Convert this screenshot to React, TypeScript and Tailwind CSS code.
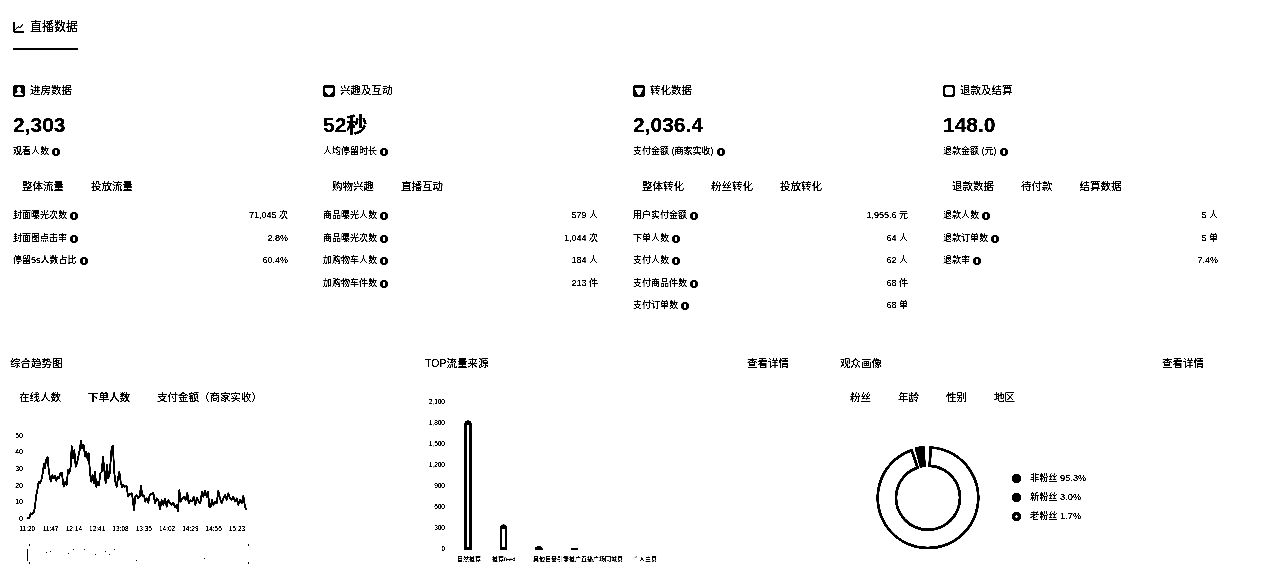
import React from "react";

const linePts = [
  80,505, 88,505, 92,490, 97,492, 102,485, 105,470, 108,440, 112,420, 116,395, 120,400, 124,390, 128,370, 132,340, 135,355, 138,330, 143,322, 146,360, 150,385, 153,395, 157,375, 161,385, 165,378, 169,392, 173,380, 177,385, 181,370, 186,368, 189,400, 192,410, 196,395, 200,405, 204,360, 208,370, 212,350, 215,288, 219,325, 223,300, 227,350, 231,340, 235,320, 239,300, 243,272, 247,295, 251,285, 255,320, 259,305, 263,330, 266,310, 270,370, 274,395, 278,375, 282,400, 285,365, 289,410, 293,395, 297,405, 301,370, 305,365, 309,320, 313,360, 317,400, 321,345, 325,385, 329,370, 335,290, 339,288, 342,360, 346,395, 350,410, 354,385, 358,365, 362,395, 366,412, 370,405, 374,410, 380,408, 384,440, 390,432, 396,430, 402,480, 406,440, 410,435, 414,445, 419,440, 423,407, 427,438, 432,436, 436,455, 440,445, 445,458, 449,435, 454,432, 460,428, 465,460, 470,445, 475,450, 480,478, 485,450, 490,465, 495,445, 500,470, 505,450, 510,460, 515,465, 520,458, 525,472, 530,465, 534,485, 538,420, 542,455, 547,445, 552,440, 557,450, 562,428, 566,460, 571,450, 576,455, 581,440, 586,465, 591,442, 596,455, 601,460, 606,425, 610,440, 615,422, 620,440, 624,425, 628,470, 632,470, 636,450, 640,465, 645,455, 650,460, 655,422, 660,445, 665,460, 670,445, 675,435, 680,450, 685,430, 690,445, 695,450, 700,440, 705,455, 710,445, 715,465, 720,450, 725,460, 730,437, 735,470, 740,480,
];

// traced from a 3x crop, so scale back to page coordinates
const linePoints = linePts
  .reduce<string[]>((acc, v, i) => {
    if (i % 2 === 0) acc.push(`${(v / 3).toFixed(1)},${(350 + linePts[i + 1] / 3).toFixed(1)}`);
    return acc;
  }, [])
  .join(" ");

const Info = () => (
  <svg width="8" height="8" viewBox="0 0 8 8" className="shrink-0">
    <circle cx="4" cy="4" r="4" fill="#000" />
    <rect x="3" y="2" width="2" height="4" fill="#fff" />
  </svg>
);

const SectionIcon = ({ kind }: { kind: string }) => (
  <svg width="12" height="12" viewBox="0 0 12 12" className="shrink-0">
    <rect x="0" y="0" width="12" height="12" rx="2.5" fill="#000" />
    {kind === "user" && (
      <>
        <circle cx="6" cy="4.4" r="2.5" fill="#fff" />
        <path d="M1.8 10.2c0-2.2 1.8-3.4 4.2-3.4s4.2 1.2 4.2 3.4z" fill="#fff" />
      </>
    )}
    {kind === "heart" && (
      <path d="M6 10.2 2 6.4C.8 4.8 1.9 2.4 3.8 2.4c1 0 1.7.5 2.2 1.2.5-.7 1.2-1.2 2.2-1.2 1.9 0 3 2.4 1.8 4z" fill="#fff" />
    )}
    {kind === "funnel" && <path d="M1.8 2.4h8.4L9.6 5 6.9 10H5.1L2.4 5z" fill="#fff" />}
    {kind === "square" && <rect x="2.2" y="2.2" width="7.6" height="7.6" rx="1.2" fill="#fff" />}
  </svg>
);

interface Section {
  icon: string;
  title: string;
  value: string;
  label: string;
  tabs: string[];
  rows: [string, string][];
}

const sections: Section[] = [
  {
    icon: "user",
    title: "进房数据",
    value: "2,303",
    label: "观看人数",
    tabs: ["整体流量", "投放流量"],
    rows: [
      ["封面曝光次数", "71,045 次"],
      ["封面图点击率", "2.8%"],
      ["停留5s人数占比", "60.4%"],
    ],
  },
  {
    icon: "heart",
    title: "兴趣及互动",
    value: "52秒",
    label: "人均停留时长",
    tabs: ["购物兴趣", "直播互动"],
    rows: [
      ["商品曝光人数", "579 人"],
      ["商品曝光次数", "1,044 次"],
      ["加购物车人数", "184 人"],
      ["加购物车件数", "213 件"],
    ],
  },
  {
    icon: "funnel",
    title: "转化数据",
    value: "2,036.4",
    label: "支付金额 (商家实收)",
    tabs: ["整体转化", "粉丝转化", "投放转化"],
    rows: [
      ["用户实付金额", "1,955.6 元"],
      ["下单人数", "64 人"],
      ["支付人数", "62 人"],
      ["支付商品件数", "68 件"],
      ["支付订单数", "68 单"],
    ],
  },
  {
    icon: "square",
    title: "退款及结算",
    value: "148.0",
    label: "退款金额 (元)",
    tabs: ["退款数据", "待付款", "结算数据"],
    rows: [
      ["退款人数", "5 人"],
      ["退款订单数", "5 单"],
      ["退款率", "7.4%"],
    ],
  },
];

const SectionColumn = ({ s }: { s: Section }) => (
  <div className="w-[275px] shrink-0">
    <div className="flex h-4 items-center gap-[5px] text-[10.5px]">
      <SectionIcon kind={s.icon} />
      <span>{s.title}</span>
    </div>
    <div className="mt-[14px] h-6 text-[21px] font-bold leading-6">{s.value}</div>
    <div className="mt-[9px] flex h-3 items-center gap-[3px] text-[9px]">
      <span>{s.label}</span>
      <Info />
    </div>
    <div className="mt-[21px] flex h-4 items-center gap-[27px] pl-[9px] text-[10.5px]">
      {s.tabs.map((t) => (
        <span key={t}>{t}</span>
      ))}
    </div>
    <div className="mt-[14px] flex flex-col gap-[8.5px]">
      {s.rows.map(([name, val]) => (
        <div key={name} className="flex h-[14px] items-center justify-between text-[9px]">
          <div className="flex items-center gap-[3px]">
            <span>{name}</span>
            <Info />
          </div>
          <span>{val}</span>
        </div>
      ))}
    </div>
  </div>
);

const TrendChart = () => (
  <svg width="260" height="145" viewBox="10 425 260 145" className="mt-[19px] block">
    {[
      ["50", 435],
      ["40", 451],
      ["30", 468],
      ["20", 485],
      ["10", 501],
      ["0", 518],
    ].map(([t, y]) => (
      <text key={t} x="23" y={Number(y) + 2.5} fontSize="7" textAnchor="end" fill="#000">
        {t}
      </text>
    ))}
    {["11:20", "11:47", "12:14", "12:41", "13:08", "13:35", "14:02", "14:29", "14:56", "15:23"].map((t, i) => (
      <text key={t} x={27.3 + 23.3 * i} y="531" fontSize="6.5" textAnchor="middle" fill="#000">
        {t}
      </text>
    ))}
    <polyline points={linePoints} fill="none" stroke="#000" strokeWidth="1.6" strokeLinejoin="round" />
    {/* range slider */}
    <rect x="27" y="549" width="1" height="12" fill="#000" />
    <rect x="29" y="544" width="1" height="2" fill="#000" />
    <rect x="29" y="562" width="1" height="2" fill="#000" />
    <rect x="248" y="544" width="1" height="2" fill="#000" />
    <rect x="248" y="562" width="1" height="2" fill="#000" />
    {[
      [46, 552], [50, 551], [68, 553], [73, 549], [84, 549], [95, 554], [105, 551], [109, 554], [114, 549], [136, 560], [204, 558],
    ].map(([x, y]) => (
      <rect key={x} x={x} y={y} width="1" height="1" fill="#000" />
    ))}
  </svg>
);

const SourceChart = () => (
  <svg width="260" height="175" viewBox="425 395 260 175" className="mt-6 block">
    {["2,100", "1,800", "1,500", "1,200", "900", "600", "300", "0"].map((t, i) => (
      <text key={t} x="445" y={403.5 + 21.1 * i} fontSize="6.5" textAnchor="end" fill="#000">
        {t}
      </text>
    ))}
    {/* tall bars read as a dark outline round a pale centre */}
    <path d="M464.5 550V424a3.5 3.5 0 0 1 7 0V550z" fill="#000" />
    <rect x="467" y="425" width="2" height="122" fill="#fff" />
    <path d="M500 550V528a3.5 3.5 0 0 1 7 0V550z" fill="#000" />
    <rect x="502" y="529" width="3" height="18" fill="#fff" />
    <path d="M535 550v-1a3.5 2.5 0 0 1 7.5 0v1z" fill="#000" />
    <rect x="571" y="548.5" width="7" height="1" fill="#000" />
    {[
      ["自然推荐", 457],
      ["推荐feed", 492],
      ["其他巨量引擎推广", 533],
      ["直播广场同城页", 581],
      ["个人主页", 633],
    ].map(([t, x]) => (
      <text key={String(t)} x={x} y="561" fontSize="6" fill="#000">
        {t}
      </text>
    ))}
  </svg>
);

// donut segment between two angles, 0 = 12 o'clock, clockwise
const seg = (cx: number, cy: number, r0: number, r1: number, a0: number, a1: number) => {
  const p = (r: number, a: number) => {
    const t = (a * Math.PI) / 180;
    return `${(cx + r * Math.sin(t)).toFixed(2)} ${(cy - r * Math.cos(t)).toFixed(2)}`;
  };
  const large = a1 - a0 > 180 ? 1 : 0;
  return `M${p(r1, a0)}A${r1} ${r1} 0 ${large} 1 ${p(r1, a1)}L${p(r0, a1)}A${r0} ${r0} 0 ${large} 0 ${p(r0, a0)}z`;
};

const Donut = () => (
  <svg width="120" height="115" viewBox="868 440 120 115" className="shrink-0">
    <path d={seg(928, 497.8, 32, 50.3, 3, 341)} fill="#fff" stroke="#000" strokeWidth="2.5" />
    <path d={seg(928, 497.8, 31, 52, 345, 356)} fill="#000" />
  </svg>
);

const Legend = () => (
  <div className="flex flex-col gap-[7px] text-[9.2px]">
    {[
      ["非粉丝 95.3%", true],
      ["新粉丝 3.0%", true],
      ["老粉丝 1.7%", false],
    ].map(([t, solid]) => (
      <div key={String(t)} className="flex h-3 items-center gap-[9px]">
        {solid ? (
          <span className="h-[9px] w-[9px] rounded-full bg-black" />
        ) : (
          <span className="h-[9px] w-[9px] rounded-full border-[3px] border-black bg-white" />
        )}
        <span>{t}</span>
      </div>
    ))}
  </div>
);

const App: React.FC = () => {
  return (
    <div className="h-[586px] w-[1280px] overflow-hidden bg-white font-['Liberation_Sans','Noto_Sans_CJK_SC',sans-serif] text-black brightness-[.78] contrast-[8]">
      {/* Page tab */}
      <div className="h-[50px] pl-[13px]">
        <div className="flex h-[50px] w-[65px] items-center gap-[5px] border-b-2 border-black pt-[6px] text-xs">
          <svg width="12" height="12" viewBox="0 0 12 12" fill="none" stroke="#000" strokeWidth="1">
            <path d="M1 1v10h10" />
            <path d="M2.5 8.5 5 5.5 7 7l3-4" />
          </svg>
          <span>直播数据</span>
        </div>
      </div>

      {/* Core metrics */}
      <div className="mt-[33px] flex h-[274px] gap-[35px] pl-[13px]">
        {sections.map((s) => (
          <SectionColumn key={s.title} s={s} />
        ))}
      </div>

      {/* Charts */}
      <div className="flex gap-[51px] pl-[10px]">
        <div className="w-[364px] shrink-0">
          <div className="flex h-[14px] items-center text-[10.5px]">综合趋势图</div>
          <div className="mt-[19px] flex h-4 items-center gap-[27px] pl-[9px] text-[10.5px]">
            <span>在线人数</span>
            <span className="font-medium">下单人数</span>
            <span>支付金额（商家实收）</span>
          </div>
          <TrendChart />
        </div>

        <div className="w-[364px] shrink-0">
          <div className="flex h-[14px] items-center justify-between text-[10.5px]">
            <span>TOP流量来源</span>
            <span>查看详情</span>
          </div>
          <SourceChart />
        </div>

        <div className="w-[364px] shrink-0">
          <div className="flex h-[14px] items-center justify-between text-[10.5px]">
            <span>观众画像</span>
            <span>查看详情</span>
          </div>
          <div className="mt-[19px] flex h-4 items-center gap-[27px] pl-[10px] text-[10.5px]">
            <span>粉丝</span>
            <span>年龄</span>
            <span>性别</span>
            <span>地区</span>
          </div>
          <div className="mt-[34px] flex items-center pl-[28px]">
            <Donut />
            <div className="ml-[24px]">
              <Legend />
            </div>
          </div>
        </div>
      </div>
    </div>
  );
};

export default App;
